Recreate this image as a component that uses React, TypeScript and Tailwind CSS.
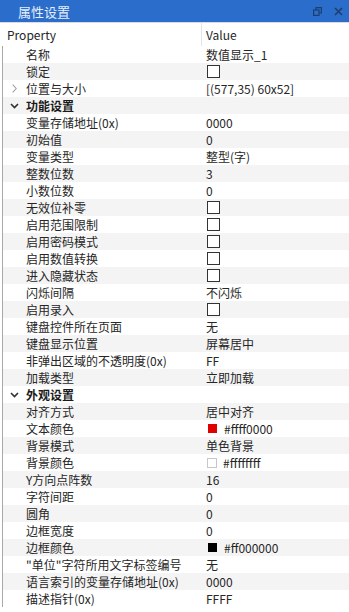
import React from "react";

type Row =
  | { kind: "group"; label: string }
  | { kind: "prop"; label: string; value?: string; check?: boolean; swatch?: string; expand?: boolean };

const rows: Row[] = [
  { kind: "prop", label: "名称", value: "数值显示_1" },
  { kind: "prop", label: "锁定", check: true },
  { kind: "prop", label: "位置与大小", value: "[(577,35) 60x52]", expand: true },
  { kind: "group", label: "功能设置" },
  { kind: "prop", label: "变量存储地址(0x)", value: "0000" },
  { kind: "prop", label: "初始值", value: "0" },
  { kind: "prop", label: "变量类型", value: "整型(字)" },
  { kind: "prop", label: "整数位数", value: "3" },
  { kind: "prop", label: "小数位数", value: "0" },
  { kind: "prop", label: "无效位补零", check: true },
  { kind: "prop", label: "启用范围限制", check: true },
  { kind: "prop", label: "启用密码模式", check: true },
  { kind: "prop", label: "启用数值转换", check: true },
  { kind: "prop", label: "进入隐藏状态", check: true },
  { kind: "prop", label: "闪烁间隔", value: "不闪烁" },
  { kind: "prop", label: "启用录入", check: true },
  { kind: "prop", label: "键盘控件所在页面", value: "无" },
  { kind: "prop", label: "键盘显示位置", value: "屏幕居中" },
  { kind: "prop", label: "非弹出区域的不透明度(0x)", value: "FF" },
  { kind: "prop", label: "加载类型", value: "立即加载" },
  { kind: "group", label: "外观设置" },
  { kind: "prop", label: "对齐方式", value: "居中对齐" },
  { kind: "prop", label: "文本颜色", value: "#ffff0000", swatch: "red" },
  { kind: "prop", label: "背景模式", value: "单色背景" },
  { kind: "prop", label: "背景颜色", value: "#ffffffff", swatch: "white" },
  { kind: "prop", label: "Y方向点阵数", value: "16" },
  { kind: "prop", label: "字符间距", value: "0" },
  { kind: "prop", label: "圆角", value: "0" },
  { kind: "prop", label: "边框宽度", value: "0" },
  { kind: "prop", label: "边框颜色", value: "#ff000000", swatch: "black" },
  { kind: "prop", label: "\"单位\"字符所用文字标签编号", value: "无" },
  { kind: "prop", label: "语言索引的变量存储地址(0x)", value: "0000" },
  { kind: "prop", label: "描述指针(0x)", value: "FFFF" },
];

function Swatch({ color }: { color: string }) {
  if (color === "red") return <span className="w-[9px] h-[9px] bg-[#e00000] mr-[7px] ml-[2px]" />;
  if (color === "black") return <span className="w-[9px] h-[9px] bg-[#000000] mr-[7px] ml-[2px]" />;
  return <span className="w-[10px] h-[10px] border border-[#c8c8c8] bg-white mr-[6px] ml-[1px]" />;
}

export default function App() {
  return (
    <div
      className="w-[349px] h-[612px] bg-white text-[12px] text-[#262626] overflow-hidden"
      style={{ fontFamily: '"Noto Sans CJK SC", "Noto Sans", sans-serif' }}
    >
      <div className="h-[22px] bg-[#2a6dcb] flex items-center pl-[18px] pr-[6px]">
        <span className="text-[13px] text-[#e6eefa] leading-none">属性设置</span>
        <div className="ml-auto flex items-center gap-[12px] text-[#1d3e6e]">
          <svg width="9" height="9" viewBox="0 0 9 9" fill="none" stroke="currentColor" strokeWidth="1.2">
            <rect x="0.6" y="3" width="5.4" height="5.4" />
            <path d="M3 3V0.6h5.4V6H6" />
          </svg>
          <svg width="9" height="9" viewBox="0 0 9 9" stroke="currentColor" strokeWidth="1.6">
            <path d="M1 1l7 7M8 1l-7 7" />
          </svg>
        </div>
      </div>
      <div className="h-[24px] flex items-center border-t border-[#dcdcdc]">
        <div className="w-[202px] pl-[7px] h-full flex items-center border-r border-[#e4e4e4]">Property</div>
        <div className="pl-[4px]">Value</div>
      </div>
      <div className="ml-[2px] border-l border-[#a9a9a9]">
        {rows.map((r, i) => (
          <div key={i} className={`h-[17px] flex items-center ${i % 2 === 1 ? "bg-[#f4f4f4]" : "bg-white"}`}>
            <div className="w-[199px] flex items-center h-full">
              <span className="w-[23px] flex justify-center">
                {r.kind === "group" ? (
                  <svg width="9" height="6" viewBox="0 0 9 6" fill="none" stroke="#303030" strokeWidth="1.6">
                    <path d="M1 1l3.5 3.5L8 1" />
                  </svg>
                ) : r.kind === "prop" && r.expand ? (
                  <svg width="5" height="9" viewBox="0 0 5 9" fill="none" stroke="#a0a0a0" strokeWidth="1.1">
                    <path d="M0.7 0.7L4.2 4.5L0.7 8.3" />
                  </svg>
                ) : null}
              </span>
              <span className={`whitespace-nowrap leading-none ${r.kind === "group" ? "font-bold text-[#1a1a1a]" : ""}`}>
                {r.label}
              </span>
            </div>
            {r.kind === "prop" && (
              <div className="pl-[4px] flex items-center whitespace-nowrap leading-none">
                {r.check ? (
                  <span className="w-[13px] h-[13px] border border-[#333333] bg-white ml-[1px]" />
                ) : (
                  <>
                    {r.swatch && <Swatch color={r.swatch} />}
                    {r.value}
                  </>
                )}
              </div>
            )}
          </div>
        ))}
      </div>
    </div>
  );
}
